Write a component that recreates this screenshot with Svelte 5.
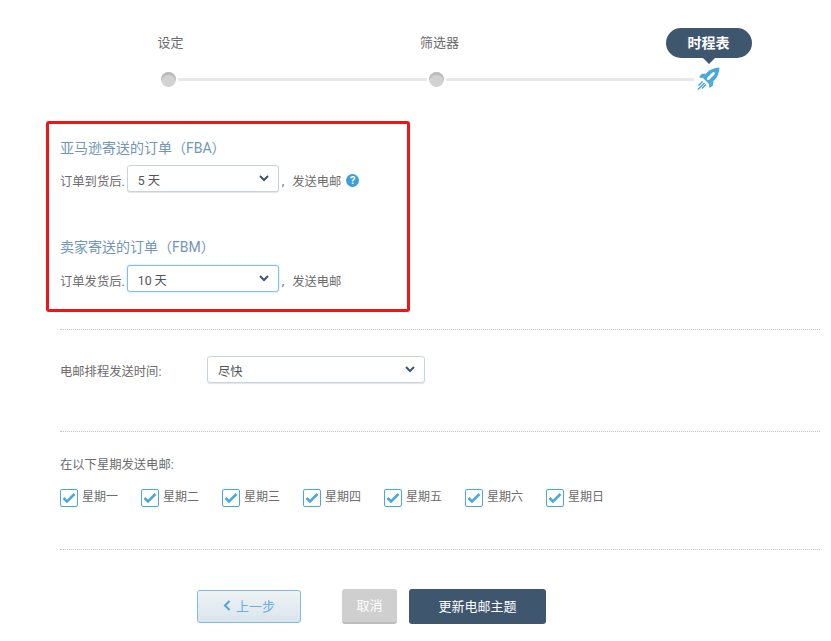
<script>
  const days = ['星期一', '星期二', '星期三', '星期四', '星期五', '星期六', '星期日'];
</script>

<div class="page">
  <div class="steps">
    <div class="labels">
      <span class="label">设定</span>
      <span class="label">筛选器</span>
      <span class="label current">时程表</span>
    </div>
    <div class="track">
      <span class="dot"></span>
      <span class="line"></span>
      <span class="dot"></span>
      <span class="line"></span>
      <svg class="rocket" width="26" height="26" viewBox="0 0 26 26">
        <path d="M24.500 1.500C19 1.800 15 3.500 12.500 6L7.500 11.500l7 7 5.500-5c2.500-2.500 4.200-6.500 4.500-12z" fill="#4aa8dc" />
        <path d="M13.200 12.800 18.500 7.500" stroke="#fff" stroke-width="2.800" stroke-linecap="round" />
        <path d="M11 7.500 6.500 8 4 11.500l3.500.5zM18.500 15l-.5 4.500-3.500 2.500-.5-3.500z" fill="#4aa8dc" />
        <path d="M7.500 15.500 3.500 19.500M9.500 17 3 23.500M11 18.500l-4 4" stroke="#4aa8dc" stroke-width="1.500" fill="none" />
      </svg>
    </div>
  </div>

  <div class="highlight">
    <h3>亚马逊寄送的订单（FBA）</h3>
    <div class="row">
      <span>订单到货后.</span>
      <div class="select small">
        <select><option>5 天</option></select>
        <svg class="chevron" width="10" height="7" viewBox="0 0 10 7"><path d="M1 1l4 4 4-4" /></svg>
      </div>
      <span class="after">,</span>
      <span class="send">发送电邮</span>
      <span class="help">?</span>
    </div>

    <h3 class="second">卖家寄送的订单（FBM）</h3>
    <div class="row">
      <span>订单发货后.</span>
      <div class="select small focused">
        <select><option>10 天</option></select>
        <svg class="chevron" width="10" height="7" viewBox="0 0 10 7"><path d="M1 1l4 4 4-4" /></svg>
      </div>
      <span class="after">,</span>
      <span class="send">发送电邮</span>
    </div>
  </div>

  <div class="section timing">
    <span class="timing-label">电邮排程发送时间:</span>
    <div class="select wide">
      <select><option>尽快</option></select>
      <svg class="chevron" width="10" height="7" viewBox="0 0 10 7"><path d="M1 1l4 4 4-4" /></svg>
    </div>
  </div>

  <div class="section weekdays">
    <div class="weekdays-title">在以下星期发送电邮:</div>
    <div class="days">
      {#each days as day}
        <label class="day">
          <span class="box">
            <svg width="14" height="12" viewBox="0 0 14 12"><path d="M1.500 6l3.500 3.500L12.500 2" /></svg>
          </span>
          <span class="day-name">{day}</span>
        </label>
      {/each}
    </div>
  </div>

  <div class="actions">
    <button class="back">
      <svg width="8" height="11" viewBox="0 0 8 11"><path d="M6.500 1 2 5.500 6.500 10" /></svg>
      上一步
    </button>
    <button class="cancel">取消</button>
    <button class="update">更新电邮主题</button>
  </div>
</div>

<style>
:global(body) {
  background: #fff;
}
.page {
  width: 831px;
  height: 641px;
  box-sizing: border-box;
  overflow: hidden;
  font-family: Roboto, "Noto Sans CJK SC", sans-serif;
  font-size: 12.300px;
  color: #6c6c6c;
}
.steps {
  height: 121px;
  box-sizing: border-box;
  padding-top: 28px;
}
.labels {
  display: grid;
  grid-template-columns: repeat(3, 269px);
  margin-left: 36px;
  height: 30px;
  align-items: center;
  justify-items: center;
}
.label {
  font-size: 13px;
  line-height: 30px;
  color: #6c6c6c;
}
.label.current {
  position: relative;
  width: 86px;
  text-align: center;
  border-radius: 15px;
  background: #3f566f;
  color: #fff;
  font-size: 14px;
  font-weight: 700;
}
.label.current::after {
  content: "";
  position: absolute;
  left: 36px;
  top: 29px;
  border: 7px solid transparent;
  border-bottom: 0;
  border-top-color: #3f566f;
}
.track {
  display: flex;
  align-items: center;
  margin: 8px 0 0 161px;
  width: 560px;
  height: 26px;
}
.dot {
  flex: none;
  width: 15px;
  height: 15px;
  border-radius: 50%;
  background: #d2d2d2;
  box-shadow: inset 0 3px 0 #bdbdbd;
}
.line {
  flex: none;
  width: 249px;
  height: 3px;
  margin: 0 2px;
  background: #e8e8e8;
}
.line:nth-of-type(4) {
  width: 248px;
}
.rocket {
  flex: none;
  margin: 0 0 0 -1px;
}
.highlight {
  width: 364px;
  height: 191px;
  box-sizing: border-box;
  margin-left: 46px;
  padding: 14px 11px 0;
  border: 3px solid #f01414;
  border-radius: 3px;
}
h3 {
  margin: 0;
  font-size: 14px;
  line-height: 20px;
  font-weight: 400;
  color: #7196b8;
}
h3.second {
  margin-top: 45px;
}
.row {
  display: flex;
  align-items: center;
  margin-top: 7px;
  height: 27px;
}
.row > span:not(.help) {
  padding-top: 5px;
}
h3.second + .row {
  margin-top: 8px;
}
.select {
  position: relative;
  box-sizing: border-box;
  height: 27px;
  border: 1px solid #c8d3dc;
  border-radius: 3px;
  box-shadow: 0 1px 1px #dfe6ec;
  background: #fff;
}
.select select {
  appearance: none;
  display: block;
  width: 100%;
  height: 100%;
  padding: 5px 24px 0 10px;
  border: 0;
  outline: 0;
  background: transparent;
  font: inherit;
  color: #555;
}
.chevron {
  position: absolute;
  right: 9px;
  top: 9px;
  pointer-events: none;
}
.chevron path {
  fill: none;
  stroke: #3f566f;
  stroke-width: 2;
}
.small {
  width: 152px;
  margin-left: 2px;
}
.focused {
  border-color: #86bde6;
  box-shadow: 0 0 2px #a8d3f2;
}
.after {
  margin-left: 3px;
}
.send {
  margin-left: 8px;
}
.help {
  width: 13px;
  height: 13px;
  margin: 4px 0 0 5px;
  border-radius: 50%;
  background: #3d9fd8;
  color: #fff;
  font-size: 11px;
  font-weight: 700;
  line-height: 13px;
  text-align: center;
}
.section {
  margin-left: 60px;
  width: 760px;
  box-sizing: border-box;
  border-top: 1px dotted #c4c4c4;
}
.timing {
  display: flex;
  align-items: flex-start;
  margin-top: 17px;
  height: 102px;
  padding-top: 26px;
}
.timing-label {
  width: 147px;
  line-height: 33px;
}
.wide {
  width: 218px;
}
.weekdays {
  height: 118px;
  padding-top: 23px;
}
.weekdays-title {
  line-height: 20px;
}
.days {
  display: flex;
  margin-top: 12px;
}
.day {
  display: flex;
  align-items: center;
  gap: 4px;
  width: 81px;
  font-size: 12px;
}
.day-name {
  padding-bottom: 5px;
}
.box {
  display: flex;
  align-items: center;
  justify-content: center;
  box-sizing: border-box;
  width: 18px;
  height: 18px;
  border: 1px solid #4aa8dc;
  border-radius: 2px;
}
.box path {
  fill: none;
  stroke: #4aa8dc;
  stroke-width: 2.500;
}
.actions {
  display: flex;
  align-items: center;
  border-top: 1px dotted #c4c4c4;
  margin-left: 60px;
  padding: 39px 0 0 137px;
  width: 760px;
  box-sizing: border-box;
}
button {
  box-sizing: border-box;
  height: 35px;
  padding: 0 0 3px;
  border: 0;
  border-radius: 3px;
  font: inherit;
  font-size: 13px;
}
.back {
  width: 104px;
  height: 33px;
  margin-right: 41px;
  border: 1px solid #7dbce6;
  background: linear-gradient(#eff3f4, #d9e5ec);
  color: #66afe0;
}
.back svg {
  margin-right: 2px;
}
.back path {
  fill: none;
  stroke: #4aa8dc;
  stroke-width: 2;
}
.cancel {
  width: 55px;
  margin-right: 12px;
  background: #cfcfcf;
  border-bottom: 2px solid #bdbdbd;
  color: #fff;
}
.update {
  width: 137px;
  background: #3f566f;
  color: #fff;
}
</style>
